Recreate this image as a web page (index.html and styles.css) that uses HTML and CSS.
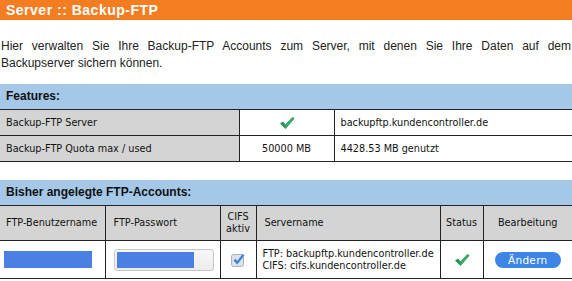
FILE: index.html
```html
<!DOCTYPE html>
<html lang="de">
  <head>
    <meta charset="UTF-8" />
    <title>Server :: Backup-FTP</title>
    <link rel="stylesheet" href="styles.css">
  </head>
  <body>
    <h1 class="page-title">Server :: Backup-FTP</h1>

    <p class="intro">
      Hier verwalten Sie Ihre Backup-FTP Accounts zum Server, mit denen Sie Ihre Daten auf dem
      Backupserver sichern können.
    </p>

    <h2 class="section-bar first">Features:</h2>
    <table class="grid features">
      <colgroup>
        <col style="width: 239px">
        <col style="width: 95px">
        <col>
      </colgroup>
      <tr>
        <td class="label">Backup-FTP Server</td>
        <td class="center">
          <svg class="check" width="16" height="14" viewBox="0 0 16 14">
            <path d="M1 7.5 L4 5.5 L6.5 8.5 L13.5 1 L15.5 2.5 L6.5 13 Z" fill="#2b9557"/>
            <path d="M6.5 8.5 L13.5 1 L15.5 2.5 L6.5 13 Z" fill="#45b574" opacity="0.6"/>
          </svg>
        </td>
        <td>backupftp.kundencontroller.de</td>
      </tr>
      <tr>
        <td class="label">Backup-FTP Quota max / used</td>
        <td class="center">50000 MB</td>
        <td>4428.53 MB genutzt</td>
      </tr>
    </table>

    <h2 class="section-bar">Bisher angelegte FTP-Accounts:</h2>
    <table class="grid accounts">
      <colgroup>
        <col style="width: 105px">
        <col style="width: 115px">
        <col style="width: 36px">
        <col style="width: 184px">
        <col style="width: 43px">
        <col>
      </colgroup>
      <tr class="head">
        <td>FTP-Benutzername</td>
        <td class="pad">FTP-Passwort</td>
        <td class="center">CIFS<br>aktiv</td>
        <td class="pad">Servername</td>
        <td class="center">Status</td>
        <td class="center">Bearbeitung</td>
      </tr>
      <tr class="row">
        <td><div class="user-mask"></div></td>
        <td>
          <div class="pass-field"><span class="pass-fill"></span></div>
        </td>
        <td class="center">
          <svg class="checkbox" width="14" height="15" viewBox="0 0 14 15">
            <rect x="0.5" y="2.5" width="12" height="12" rx="2" fill="#dde2e8" stroke="#a9b1bb"/>
            <path d="M2.5 8.5 L4.5 6.8 L6.3 9 L11.5 2 L13.5 3.2 L6.3 12.5 Z" fill="#3f7fd6"/>
          </svg>
        </td>
        <td class="servers">FTP: backupftp.kundencontroller.de<br>CIFS: cifs.kundencontroller.de</td>
        <td class="center">
          <svg class="check" width="16" height="14" viewBox="0 0 16 14">
            <path d="M1 7.5 L4 5.5 L6.5 8.5 L13.5 1 L15.5 2.5 L6.5 13 Z" fill="#2b9557"/>
            <path d="M6.5 8.5 L13.5 1 L15.5 2.5 L6.5 13 Z" fill="#45b574" opacity="0.6"/>
          </svg>
        </td>
        <td class="center"><a class="btn" href="#">Ändern</a></td>
      </tr>
    </table>
  </body>
</html>
```

FILE: styles.css
```css
* {
  margin: 0;
  padding: 0;
  box-sizing: border-box;
}

body {
  font-family: "Liberation Sans", Arial, sans-serif;
  color: #222;
  background: #fff;
  width: 572px;
}

.page-title {
  background: #f47d22;
  color: #fff;
  font-size: 14px;
  letter-spacing: 0.5px;
  font-weight: bold;
  height: 20px;
  line-height: 20px;
  padding-left: 6px;
}

.intro {
  font-size: 12px;
  line-height: 16.5px;
  text-align: justify;
  padding: 18px 1px 0 1px;
  height: 64px;
}

.section-bar {
  background: #a5c8e8;
  font-size: 12px;
  font-weight: bold;
  color: #111;
  height: 25px;
  line-height: 25px;
  padding-left: 6px;
  margin-top: 18px;
}

.section-bar.first {
  margin-top: 0;
}

.grid {
  width: 100%;
  border-collapse: collapse;
  table-layout: fixed;
  font-family: "DejaVu Sans", Verdana, sans-serif;
  font-size: 9.7px;
  color: #111;
}

.grid td {
  border: 1px solid #222;
  padding: 0 6px;
  background: #fff;
}

.grid td:first-child {
  border-left: none;
}

.grid td:last-child {
  border-right: none;
}

.features td {
  height: 26px;
}

.features td.label {
  background: #d4d4d4;
}

.center {
  text-align: center;
}

.check {
  display: inline-block;
  vertical-align: middle;
}

.accounts .head td {
  background: #d4d4d4;
  height: 35px;
  line-height: 12px;
  padding: 0 6px;
}

.accounts .head td.pad {
  padding-left: 8px;
}

.accounts .head td.center {
  padding: 0 2px;
}

.accounts .row td {
  height: 38px;
}

.accounts .row td:first-child,
.accounts .row td:nth-child(2) {
  padding: 0 4px;
}

.user-mask {
  width: 88px;
  height: 17px;
  background: #4a80e3;
}

.pass-field {
  width: 100px;
  height: 22px;
  margin-left: 4px;
  border: 1px solid #c8c8c8;
  border-radius: 3px;
  background: linear-gradient(#f7f7f7, #ececec);
  padding: 2px;
  display: flex;
}

.pass-fill {
  width: 77px;
  background: #4a80e3;
}

.checkbox {
  display: inline-block;
  vertical-align: middle;
}

.accounts .row td.servers {
  line-height: 11.5px;
  padding: 0 6px;
  white-space: nowrap;
}

.btn {
  display: inline-block;
  width: 66px;
  height: 16px;
  line-height: 16px;
  border-radius: 8px;
  background: #3d86e6;
  color: #fff;
  text-decoration: none;
  font-size: 10.5px;
  letter-spacing: 0.3px;
  vertical-align: middle;
}
```
